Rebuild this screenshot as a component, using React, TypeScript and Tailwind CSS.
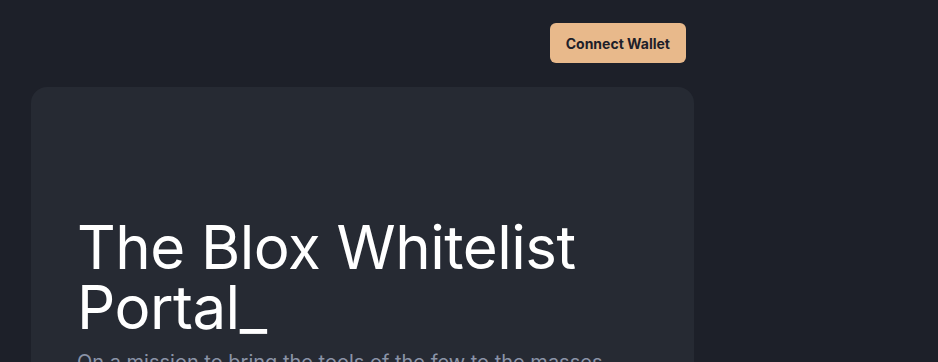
import React from 'react';

const App: React.FC = () => {
  return (
    <div
      className="min-h-screen bg-[#1d2029] px-[31px] pt-[23px] overflow-hidden"
      style={{ fontFamily: 'Inter, "Liberation Sans", sans-serif' }}
    >
      <div className="w-[663px]">
        {/* Header */}
        <div className="flex justify-end pr-2">
          <button className="h-10 px-4 rounded-md bg-[#e8b98b] text-[14px] font-bold text-[#1d2029]">
            Connect Wallet
          </button>
        </div>

        {/* Hero card */}
        <div className="mt-6 rounded-2xl bg-[#262a33] pl-[46px] pr-10 pt-[130px] pb-16">
          <h1 className="text-[60px] leading-[60px] font-normal tracking-[-0.5px] text-white">
            The Blox Whitelist
            <br />
            Portal_
          </h1>
          <p className="mt-[11px] text-xl text-[#8b94a8]">
            On a mission to bring the tools of the few to the masses
          </p>
        </div>
      </div>
    </div>
  );
};

export default App;
